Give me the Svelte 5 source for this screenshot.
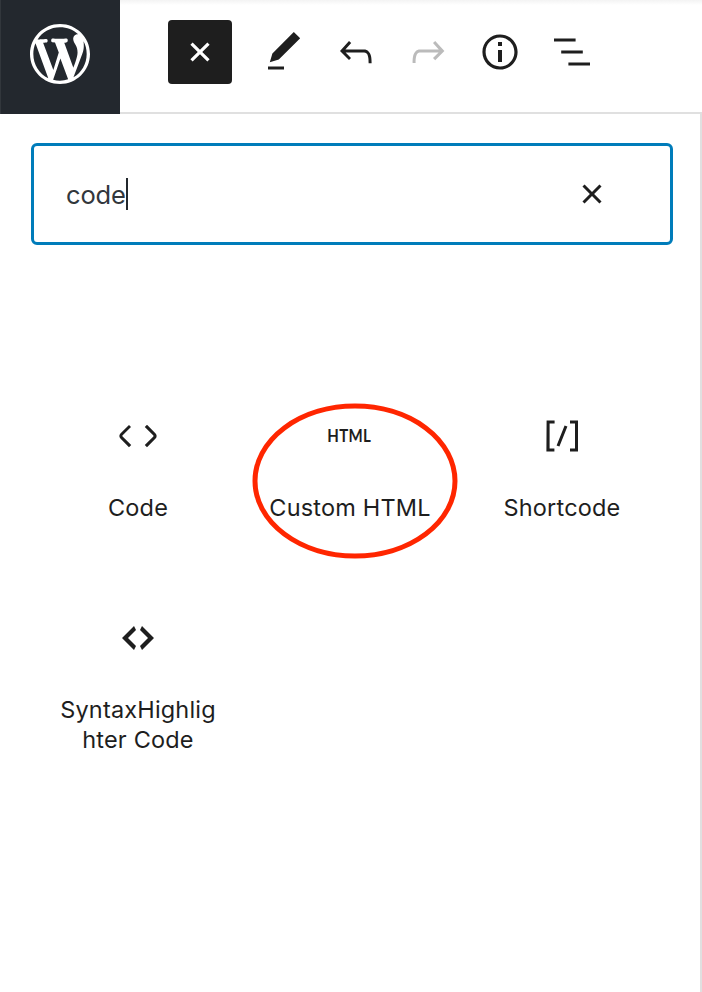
<script>
  let query = $state('code');

  const tools = [
    { name: 'Edit', d: 'M20.1 5.1L16.9 2 6.2 12.7l-1.3 4.4 4.5-1.3L20.1 5.1zM4 20.8h8v-1.5H4v1.5z' },
    { name: 'Undo', d: 'M18.3 11.7c-.6-.6-1.4-.9-2.3-.9H6.7l2.9-3.3-1.1-1-4.5 5L8.5 16l1-1-2.7-2.7H16c.5 0 .9.2 1.3.5 1 1 1 3.4 1 4.5v.3h1.5v-.2c0-1.5 0-4.3-1.5-5.7z' },
    { name: 'Redo', disabled: true, d: 'M15.6 6.5l-1.1 1 2.9 3.3H8c-.9 0-1.7.3-2.3.9-1.4 1.5-1.4 4.2-1.4 5.6v.2h1.5v-.3c0-1.1 0-3.5 1-4.5.3-.3.7-.5 1.3-.5h9.2L14.5 15l1.1 1.1 4.6-4.6-4.6-5z' },
    { name: 'Details', d: 'M12 3.2c-4.8 0-8.8 3.9-8.8 8.8 0 4.8 3.9 8.8 8.8 8.8 4.8 0 8.8-3.9 8.8-8.8 0-4.8-4-8.8-8.8-8.8zm0 16c-4 0-7.2-3.3-7.2-7.2C4.8 8 8 4.8 12 4.8s7.2 3.3 7.2 7.2c0 4-3.2 7.2-7.2 7.2zM11 17h2v-6h-2v6zm0-8h2V7h-2v2z' },
    { name: 'List view', d: 'M13.8 5.2H3v1.5h10.8V5.2zm-3.6 12v1.5H21v-1.5H10.2zm7.2-6H6.6v1.5h10.8v-1.5z' }
  ];

  const blocks = [
    { lines: ['Code'], size: 24, d: 'M20.8 10.7l-4.3-4.3-1.1 1.1 4.3 4.3c.1.1.1.3 0 .4l-4.3 4.3 1.1 1.1 4.3-4.3c.7-.8.7-1.9 0-2.6zM4.2 11.8l4.3-4.3-1-1-4.3 4.3c-.7.7-.7 1.8 0 2.5l4.3 4.3 1.1-1.1-4.3-4.3c-.2-.1-.2-.3-.1-.4z' },
    { lines: ['Custom HTML'], word: 'HTML', marked: true },
    { lines: ['Shortcode'], size: 24, d: 'M16 4.2v1.5h2.5v12.5H16v1.5h4V4.2h-4zM4.2 19.8h4v-1.5H5.8V5.8h2.5V4.2h-4l-.1 15.6zm5.1-3.1l1.4.6 4-10-1.4-.6-4 10z' },
    { lines: ['SyntaxHighlig', 'hter Code'], size: 20, d: 'M9 6l-4 4 4 4-1 2-6-6 6-6zm2 8l4-4-4-4 1-2 6 6-6 6z' }
  ];
</script>

<div class="editor">
  <header>
    <div class="logo">
      <svg width="72" height="72" viewBox="-2 -2 24 24"><path d="M20 10c0-5.51-4.49-10-10-10C4.48 0 0 4.49 0 10c0 5.52 4.48 10 10 10 5.51 0 10-4.48 10-10zM7.78 15.37L4.37 6.22c.55-.02 1.17-.08 1.17-.08.5-.06.44-1.13-.06-1.11 0 0-1.45.11-2.37.11-.18 0-.37 0-.58-.01C4.12 2.69 6.87 1.11 10 1.11c2.33 0 4.45.87 6.05 2.34-.68-.11-1.65.39-1.65 1.58 0 .74.45 1.36.9 2.1.35.61.55 1.36.55 2.46 0 1.49-1.4 5-1.4 5l-3.03-8.37c.54-.02.82-.17.82-.17.5-.05.44-1.25-.06-1.22 0 0-1.44.12-2.38.12-.87 0-2.33-.12-2.33-.12-.5-.03-.56 1.2-.06 1.22l.92.08 1.26 3.41zM17.41 10c.24-.64.74-1.87.43-4.25.7 1.29 1.05 2.71 1.05 4.25 0 3.29-1.73 6.24-4.4 7.78.97-2.59 1.94-5.2 2.92-7.78zM6.1 18.09C3.12 16.65 1.11 13.53 1.11 10c0-1.3.23-2.48.72-3.59C3.25 10.3 4.67 14.2 6.1 18.09zm4.03-6.63l2.58 6.98c-.86.29-1.76.45-2.71.45-.79 0-1.57-.11-2.29-.33.81-2.38 1.62-4.74 2.42-7.1z" /></svg>
    </div>
    <div class="toolbar">
      <button class="toggle" aria-label="Close inserter">
        <svg class="cross" width="48" height="48" viewBox="0 0 24 24"><path d="M18 11.2h-5.2V6h-1.6v5.2H6v1.6h5.2V18h1.6v-5.2H18z" /></svg>
      </button>
      <div class="tools">
        {#each tools as tool}
          <button class="tool" class:disabled={tool.disabled} aria-label={tool.name}>
            <svg width="48" height="48" viewBox="0 0 24 24"><path d={tool.d} /></svg>
          </button>
        {/each}
      </div>
    </div>
  </header>

  <main>
    <div class="search">
      <span class="query">{query}</span><span class="caret"></span>
      <button class="clear" aria-label="Clear search" onclick={() => (query = '')}>
        <svg width="48" height="48" viewBox="0 0 24 24"><path d="M12 13.06l3.712 3.713 1.061-1.06L13.061 12l3.712-3.712-1.06-1.06L12 10.938 8.288 7.227l-1.061 1.06L10.939 12l-3.712 3.712 1.06 1.061L12 13.061z" /></svg>
      </button>
    </div>

    <div class="grid">
      {#each blocks as block}
        <div class="block">
          <div class="icon">
            {#if block.word}
              <span class="word">{block.word}</span>
            {:else}
              <svg width={block.size * 2} height={block.size * 2} viewBox="0 0 {block.size} {block.size}"><path d={block.d} /></svg>
            {/if}
          </div>
          <div class="label">
            {#each block.lines as line}<div>{line}</div>{/each}
          </div>
          {#if block.marked}
            <svg class="ring" width="206" height="156" viewBox="0 0 206 156"><ellipse cx="103" cy="78" rx="100" ry="75" /></svg>
          {/if}
        </div>
      {/each}
    </div>
  </main>
</div>

<style>
  :global(body) { margin: 0; background: #fff; }
  .editor {
    box-sizing: border-box;
    height: 992px;
    display: flex;
    flex-direction: column;
    font-family: Inter, "Liberation Sans", sans-serif;
    color: #1e1e1e;
    overflow: hidden;
  }
  svg { display: block; fill: currentColor; flex: none; }
  button { border: 0; padding: 0; background: none; color: inherit; display: flex; align-items: center; justify-content: center; }
  header { display: flex; height: 114px; flex: none; }
  .logo {
    box-sizing: border-box;
    width: 120px;
    padding: 18px 0 0 23px;
    border-left: 1px solid #32373c;
    background: #23282e;
    color: #fff;
  }
  .toolbar {
    box-sizing: border-box;
    flex: 1;
    display: flex;
    align-items: flex-start;
    padding: 20px 0 0 48px;
    gap: 24px;
    border-bottom: 2px solid #e0e0e0;
    background: linear-gradient(#f3f3f3, #fff 5px);
  }
  .toggle { width: 64px; height: 64px; border-radius: 4px; background: #1e1e1e; color: #fff; }
  .cross { transform: rotate(45deg); }
  .tools { display: flex; }
  .tool { box-sizing: border-box; width: 72px; height: 64px; justify-content: flex-start; padding: 0 20px 0 4px; }
  .disabled { color: #bbb; }
  main { flex: 1; box-sizing: border-box; border-right: 2px solid #e0e0e0; padding: 29px 27px 0 31px; }
  .search {
    box-sizing: border-box;
    height: 102px;
    border: 3px solid #007cba;
    border-radius: 6px;
    display: flex;
    align-items: center;
    padding: 0 54px 0 32px;
  }
  .query { width: 60px; padding-top: 2px; box-sizing: border-box; font-size: 25.5px; line-height: 32px; letter-spacing: -0.15px; color: #32373c; white-space: nowrap; }
  .caret { width: 2px; height: 32px; background: #23282d; }
  .clear { margin-left: auto; }
  .grid { display: grid; grid-template-columns: repeat(3, 212px); grid-auto-rows: 202px; padding: 167px 0 0 1px; }
  .block { position: relative; display: flex; flex-direction: column; align-items: center; }
  .icon { height: 48px; display: flex; align-items: center; justify-content: center; }
  .word { font: 700 16.5px/24px Lato, sans-serif; letter-spacing: 0.4px; padding-right: 1px; transform: scaleX(0.91); }
  .label { margin-top: 33px; font-size: 23.5px; line-height: 30px; text-align: center; letter-spacing: 0.18px; white-space: nowrap; }
  .ring { position: absolute; left: 8px; top: -9px; fill: none; stroke: #ff2600; stroke-width: 5; pointer-events: none; }
</style>
